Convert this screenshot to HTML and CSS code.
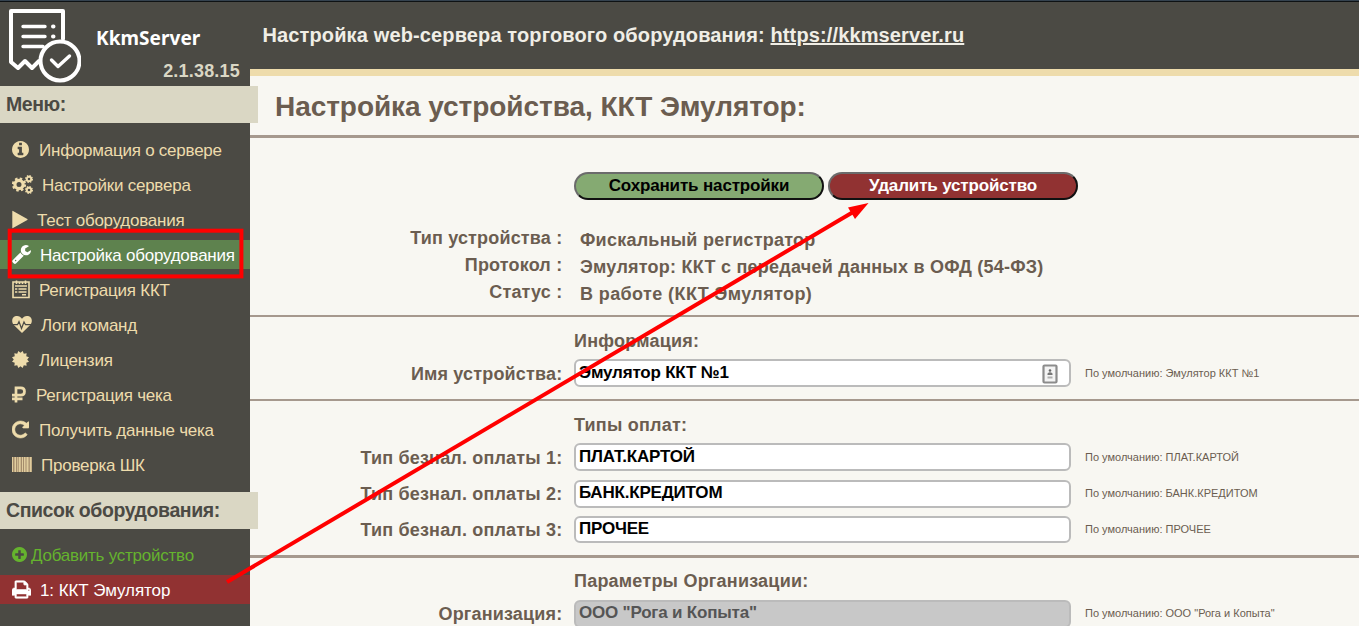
FILE: index.html
```html
<!DOCTYPE html>
<html lang="ru">
<head>
<meta charset="utf-8">
<title>KkmServer</title>
<link rel="stylesheet" href="styles.css">
</head>
<body>
<div class="page">
  <aside class="sidebar">
    <div class="brand">
      <svg class="logo" width="74" height="76" viewBox="0 0 74 76" fill="none" stroke="#fff" stroke-width="4" stroke-linecap="round" stroke-linejoin="round">
        <path d="M56 31V3H4V54L11 60L18 53L25 60L32 53"/>
        <path d="M16 18.500H38M16 28.500H38M16 38.500H36" stroke-width="3.400"/>
        <path d="M46 18.500h.5M46 28.500h.5" stroke-width="4"/>
        <circle cx="53" cy="53" r="19.500" fill="#4b4a44"/>
        <path d="M44.500 52L51 58.500L62.500 48" stroke-width="3.400"/>
      </svg>
      <div class="brand-text"><span class="name">KkmServer</span><span class="version">2.1.38.15</span></div>
    </div>
    <h2 class="side-title">Меню:</h2>
    <nav class="menu">
      <a class="item"><svg class="ic ic-info" viewBox="128 128 1536 1536"><path d="M1152 1376v-160q0-14-9-23t-23-9h-96v-512q0-14-9-23t-23-9h-320q-14 0-23 9t-9 23v160q0 14 9 23t23 9h96v320h-96q-14 0-23 9t-9 23v160q0 14 9 23t23 9h448q14 0 23-9t9-23zm-128-896v-160q0-14-9-23t-23-9h-192q-14 0-23 9t-9 23v160q0 14 9 23t23 9h192q14 0 23-9t9-23zm640 416q0 209-103 385.500t-279.500 279.500-385.500 103-385.500-103-279.500-279.500-103-385.500 103-385.500 279.500-279.500 385.500-103 385.500 103 279.500 279.500 103 385.500z"/></svg><span>Информация о сервере</span></a>
      <a class="item"><svg class="ic ic-gears" viewBox="0 0 21 19"><g fill="none" stroke="currentColor"><circle cx="7" cy="9.500" r="4.100" stroke-width="3.200"/><circle cx="7" cy="9.500" r="6" stroke-width="2.200" stroke-dasharray="2.500 2.212"/><circle cx="17" cy="4" r="2.200" stroke-width="1.900"/><circle cx="17" cy="4" r="3.300" stroke-width="1.400" stroke-dasharray="1.500 1.092"/><circle cx="17" cy="15" r="2.200" stroke-width="1.900"/><circle cx="17" cy="15" r="3.300" stroke-width="1.400" stroke-dasharray="1.500 1.092"/></g></svg><span>Настройки сервера</span></a>
      <a class="item"><svg class="ic ic-play" viewBox="0 0 16 18"><path d="M.3.8Q.3 0 1 .4L15.300 8.500Q16 9 15.300 9.500L1 17.600Q.3 18 .3 17.200Z"/></svg><span>Тест оборудования</span></a>
      <a class="item active"><svg class="ic ic-wrench" viewBox="64 128 1662 1643"><path d="M448 1472q0-26-19-45t-45-19-45 19-19 45 19 45 45 19 45-19 19-45zm644-420l-682 682q-37 37-90 37-52 0-91-37l-106-108q-38-36-38-90 0-53 38-91l681-681q39 98 114.500 173.500t173.500 114.500zm634-435q0 39-23 106-47 134-164.500 217.500t-258.500 83.500q-185 0-316.500-131.500t-131.500-316.500 131.500-316.500 316.500-131.500q58 0 121.500 16.500t107.500 46.500q16 11 16 28t-16 28l-293 169v224l193 107q5-3 79-48.500t135.500-81 70.500-35.500q15 0 23.500 10t8.500 25z"/></svg><span>Настройка оборудования</span></a>
      <a class="item"><svg class="ic ic-list" viewBox="0 0 18 18"><path d="M1 1.500H17V17H1Z M4.500 0V3.500M7.500 1V3.500M10.500 1V3.500M13.500 0V3.500M3 5.500H15M3 8.500H5.300M6.500 8.500H14.500M3 11.500H5.300M6.500 11.500H14.500M10 14.200H14" fill="none" stroke="currentColor" stroke-width="1.600"/></svg><span>Регистрация ККТ</span></a>
      <a class="item"><svg class="ic ic-heart" viewBox="0 0 20 18"><path d="M10 17.500L1.800 9.500C-.8 6.500-.2 2 3 .8C6-.3 8.500 1 10 3.200C11.500 1 14-.3 17 .8C20.200 2 20.800 6.500 18.200 9.500Z"/><path d="M1 9.200H5.500L7 6L9.500 13L12 6.500L13.500 9.200H19" fill="none" stroke="#4b4a44" stroke-width="1.200"/></svg><span>Логи команд</span></a>
      <a class="item"><svg class="ic ic-cert" viewBox="0 0 18 18"><path d="M9 1.900L11.300 0L12.500 2.900L15.500 2.500L15.100 5.500L18 6.700L16.100 9L18 11.300L15.100 12.500L15.500 15.500L12.500 15.100L11.300 18L9 16.100L6.700 18L5.500 15.100L2.500 15.500L2.900 12.500L0 11.300L1.900 9L0 6.700L2.900 5.500L2.500 2.500L5.500 2.900L6.700 0Z"/></svg><span>Лицензия</span></a>
      <a class="item"><svg class="ic ic-rub" viewBox="0 0 14 16"><path d="M4 16V1.400H8.800Q12.500 1.400 12.500 5T8.800 8.700H0M0 12.300H10.500" fill="none" stroke="currentColor" stroke-width="2.700"/></svg><span>Регистрация чека</span></a>
      <a class="item"><svg class="ic ic-repeat" viewBox="128 128 1536 1536"><path d="M1664 256v448q0 26-19 45t-45 19h-448q-42 0-59-40-17-39 14-69l138-138q-148-137-349-137-104 0-198.500 40.500t-163.500 109.500-109.500 163.500-40.500 198.500 40.500 198.500 109.500 163.500 163.500 109.500 198.500 40.500q119 0 225-52t179-147q7-10 23-12 15 0 25 9l137 138q9 8 9.500 20.500t-7.500 22.500q-109 132-264 204.500t-327 72.500q-156 0-298-61t-245-164-164-245-61-298 61-298 164-245 245-164 298-61q147 0 284.500 55.500t244.500 156.500l130-129q29-31 70-14 39 17 39 59z" stroke="currentColor" stroke-width="50"/></svg><span>Получить данные чека</span></a>
      <a class="item"><svg class="ic ic-barcode" viewBox="0 0 20 15"><path fill="#a48c6c" d="M0 0h20v15H0z"/><path fill="#e0cd9e" d="M0 0h1v15H0zM2.500 0h1.500v15h-1.500zM5.300 0h1v15h-1zM7 0h1.700v15H7zM10 0h1v15h-1zM12 0h1.500v15h-1.500zM14.500 0h2v15h-2zM17.800 0h1.700v15h-1.700z"/></svg><span>Проверка ШК</span></a>
    </nav>
    <h2 class="side-title">Список оборудования:</h2>
    <nav class="menu devices">
      <a class="item add"><svg class="ic ic-plus" viewBox="128 128 1536 1536"><path d="M1344 960v-128q0-26-19-45t-45-19h-256v-256q0-26-19-45t-45-19h-128q-26 0-45 19t-19 45v256h-256q-26 0-45 19t-19 45v128q0 26 19 45t45 19h256v256q0 26 19 45t45 19h128q26 0 45-19t19-45v-256h256q26 0 45-19t19-45zm320-64q0 209-103 385.500t-279.500 279.500-385.500 103-385.500-103-279.500-279.500-103-385.500 103-385.500 279.500-279.500 385.500-103 385.500 103 279.500 279.500 103 385.500z"/></svg><span>Добавить устройство</span></a>
      <a class="item device"><svg class="ic ic-print" viewBox="64 128 1664 1536"><path d="M448 1536h896v-256h-896v256zm0-640h896v-384h-160q-40 0-68-28t-28-68v-160h-640v640zm1152 64q0-26-19-45t-45-19-45 19-19 45 19 45 45 19 45-19 19-45zm128 0v416q0 13-9.500 22.500t-22.500 9.500h-224v160q0 40-28 68t-68 28h-960q-40 0-68-28t-28-68v-160h-224q-13 0-22.500-9.500t-9.500-22.500v-416q0-79 56.500-135.500t135.500-56.500h64v-544q0-40 28-68t68-28h672q40 0 88 20t76 48l152 152q28 28 48 76t20 88v256h64q79 0 135.500 56.500t56.500 135.500z" stroke="currentColor" stroke-width="50"/></svg><span>1: ККТ Эмулятор</span></a>
    </nav>
  </aside>
  <main class="main">
    <header class="top"><span>Настройка web-сервера торгового оборудования: <a class="site">https://kkmserver.ru</a></span></header>
    <h1 class="title"><span>Настройка устройства, ККТ Эмулятор:</span></h1>
    <section class="block summary">
      <div class="buttons"><button class="btn save">Сохранить настройки</button><button class="btn delete">Удалить устройство</button></div>
      <div class="row fact"><span class="label">Тип устройства :</span><span class="value">Фискальный регистратор</span></div>
      <div class="row fact"><span class="label">Протокол :</span><span class="value">Эмулятор: ККТ с передачей данных в ОФД (54-ФЗ)</span></div>
      <div class="row fact"><span class="label">Статус :</span><span class="value status">В работе (ККТ Эмулятор)</span></div>
    </section>
    <section class="block">
      <h3 class="heading">Информация:</h3>
      <div class="row"><span class="label">Имя устройства:</span><div class="field"><span>Эмулятор ККТ №1</span><svg class="contact" width="16" height="20" viewBox="0 0 16 20"><rect x="1.500" y="1.500" width="13" height="17" rx="1" fill="#f4f4f4" stroke="#8c8c8c" stroke-width="2.200"/><circle cx="8" cy="6.500" r="1.300" fill="#666"/><path d="M5.500 11V9.500Q8 7 10.500 9.500V11Z" fill="#777"/><path d="M5.500 13.500H10.500" stroke="#b0b0b0" stroke-width="2"/></svg></div><span class="hint">По умолчанию: Эмулятор ККТ №1</span></div>
    </section>
    <section class="block thick">
      <h3 class="heading">Типы оплат:</h3>
      <div class="row"><span class="label">Тип безнал. оплаты 1:</span><div class="field"><span>ПЛАТ.КАРТОЙ</span></div><span class="hint">По умолчанию: ПЛАТ.КАРТОЙ</span></div>
      <div class="row compact"><span class="label">Тип безнал. оплаты 2:</span><div class="field"><span>БАНК.КРЕДИТОМ</span></div><span class="hint">По умолчанию: БАНК.КРЕДИТОМ</span></div>
      <div class="row compact"><span class="label">Тип безнал. оплаты 3:</span><div class="field"><span>ПРОЧЕЕ</span></div><span class="hint">По умолчанию: ПРОЧЕЕ</span></div>
    </section>
    <section class="block organization">
      <h3 class="heading">Параметры Организации:</h3>
      <div class="row"><span class="label">Организация:</span><div class="field disabled"><span>ООО "Рога и Копыта"</span></div><span class="hint">По умолчанию: ООО "Рога и Копыта"</span></div>
    </section>
  </main>
  <svg class="marks" width="1359" height="626" viewBox="0 0 1359 626">
    <rect x="9.700" y="230.700" width="231.700" height="45.700" fill="none" stroke="#f00" stroke-width="4"/>
    <path d="M227 582L854 211.500" stroke="#f00" stroke-width="4"/>
    <path d="M868.500 203L848 207.500L855 219Z" fill="#f00"/>
  </svg>
</div>
</body>
</html>
```
FILE: styles.css
```css
* { box-sizing: border-box; }
body { margin: 0; overflow: hidden; border-top: 1px solid #34424f; font-family: "Liberation Sans", Arial, sans-serif; }
h1, h2, h3 { margin: 0; }
.page { position: relative; display: flex; width: 1359px; height: 625px; overflow: hidden; background: #f8f7f2; border-top: 1px solid #0e1214; }
.sidebar { width: 250px; flex: none; background: #4b4a44; height: 626px; }
.brand { height: 84px; display: flex; padding: 6px 10px 0 7px; color: #fff; }
.logo { flex: none; }
.brand-text { flex: 1; display: flex; flex-direction: column; font-weight: bold; }
.name { font: bold 19px/24px "Noto Sans", sans-serif; padding: 18px 0 0 15px; letter-spacing: .05px; }
.version { text-align: right; font-size: 18px; line-height: 20px; margin-top: 11px; color: #dad7c4; letter-spacing: .2px; }
.side-title { width: 258px; height: 37px; line-height: 36px; padding-left: 6px; background: #dad7c4; color: #4b4a44; font-size: 19.5px; letter-spacing: -.42px; white-space: nowrap; position: relative; }
.menu { display: flex; flex-direction: column; gap: 6px; padding: 12px 0 13px; }
.devices { padding-top: 11px; }
.item { height: 29px; display: flex; align-items: center; padding: 2px 0 0 12px; color: #eedcac; font-size: 17px; letter-spacing: -.24px; white-space: nowrap; }
.ic { flex: none; height: 19px; fill: currentColor; margin: -2px 10px 0 0; }
.ic-info, .ic-cert, .ic-repeat { width: 17px; }
.ic-gears { width: 21px; margin-right: 9px; }
.ic-play { width: 16px; margin-right: 9px; }
.ic-wrench { width: 19px; margin-right: 9px; }
.ic-list { width: 18px; margin-right: 9px; }
.ic-heart, .ic-barcode { width: 20px; }
.ic-heart, .ic-barcode { margin-right: 9px; }
.ic-rub { width: 14px; }
.ic-plus { width: 15px; margin-right: 4px; }
.ic-print { width: 19px; margin-right: 9px; }
.active { background: #5e824e; color: #fff; }
.add { color: #65b32e; }
.device { background: #913232; color: #fff; letter-spacing: -.08px; }
.main { flex: 1; min-width: 0; color: #6b5d50; font-weight: bold; }
.top { height: 74px; border-bottom: 7px solid #eedcac; background: #4b4a44; color: #f0eee6; font-size: 20px; line-height: 67px; padding-left: 12.500px; letter-spacing: .13px; white-space: nowrap; }
.site { text-decoration: underline; }
.title { height: 62px; border-bottom: 3px solid #a6998e; font-size: 28px; line-height: 61px; padding-left: 25px; letter-spacing: -.06px; white-space: nowrap; }
.block { border-bottom: 2px solid #a6998e; padding-bottom: 12px; }
.thick { border-bottom-width: 3px; }
.summary { padding: 34px 0 9px; }
.buttons { display: flex; gap: 4px; margin: 0 0 25px 324px; }
.btn { width: 250px; height: 28px; padding: 0; border: 2px solid; border-color: #6b6b6b #111 #111 #6b6b6b; border-radius: 14px; font: bold 17px "Liberation Sans", sans-serif; letter-spacing: -.15px; }
.save { background: #85aa72; color: #000; }
.delete { background: #913232; color: #fff; }
.row { display: grid; grid-template-columns: 313px 497px 1fr; grid-template-rows: 100%; column-gap: 11px; height: 28px; white-space: nowrap; font-size: 18px; line-height: 30px; letter-spacing: .17px; }
.compact { height: 27px; margin-top: 9px; line-height: 28px; }
.block .compact:nth-child(3) { height: 28px; margin-bottom: -1px; }
.fact { height: 27px; line-height: 27px; }
.label { text-align: right; padding-right: .7px; }
.value { padding: 2px 0 0 6px; letter-spacing: .24px; }
.status { letter-spacing: .4px; }
.heading { height: 42px; line-height: 48px; padding-left: 324px; font-size: 18px; letter-spacing: .22px; }
.field { display: flex; justify-content: space-between; border: 2px solid #bbb; border-radius: 6px; background: #fff; color: #000; padding: 0 11px 0 3px; font-size: 17px; line-height: 23px; letter-spacing: -.2px; }
.compact .field { line-height: 22px; }
.contact { margin-top: 3px; }
.disabled { background: #c8c8c8; color: #555; }
.hint { font-size: 11px; font-weight: normal; letter-spacing: 0; padding-left: 3px; line-height: 28px; }
.compact .hint { line-height: 26px; }
.organization .heading { line-height: 46px; }
.organization .row { line-height: 28px; }
.organization .field { line-height: 22px; }
.organization .hint { line-height: 27px; }
.marks { position: absolute; left: 0; top: -2px; }
```
